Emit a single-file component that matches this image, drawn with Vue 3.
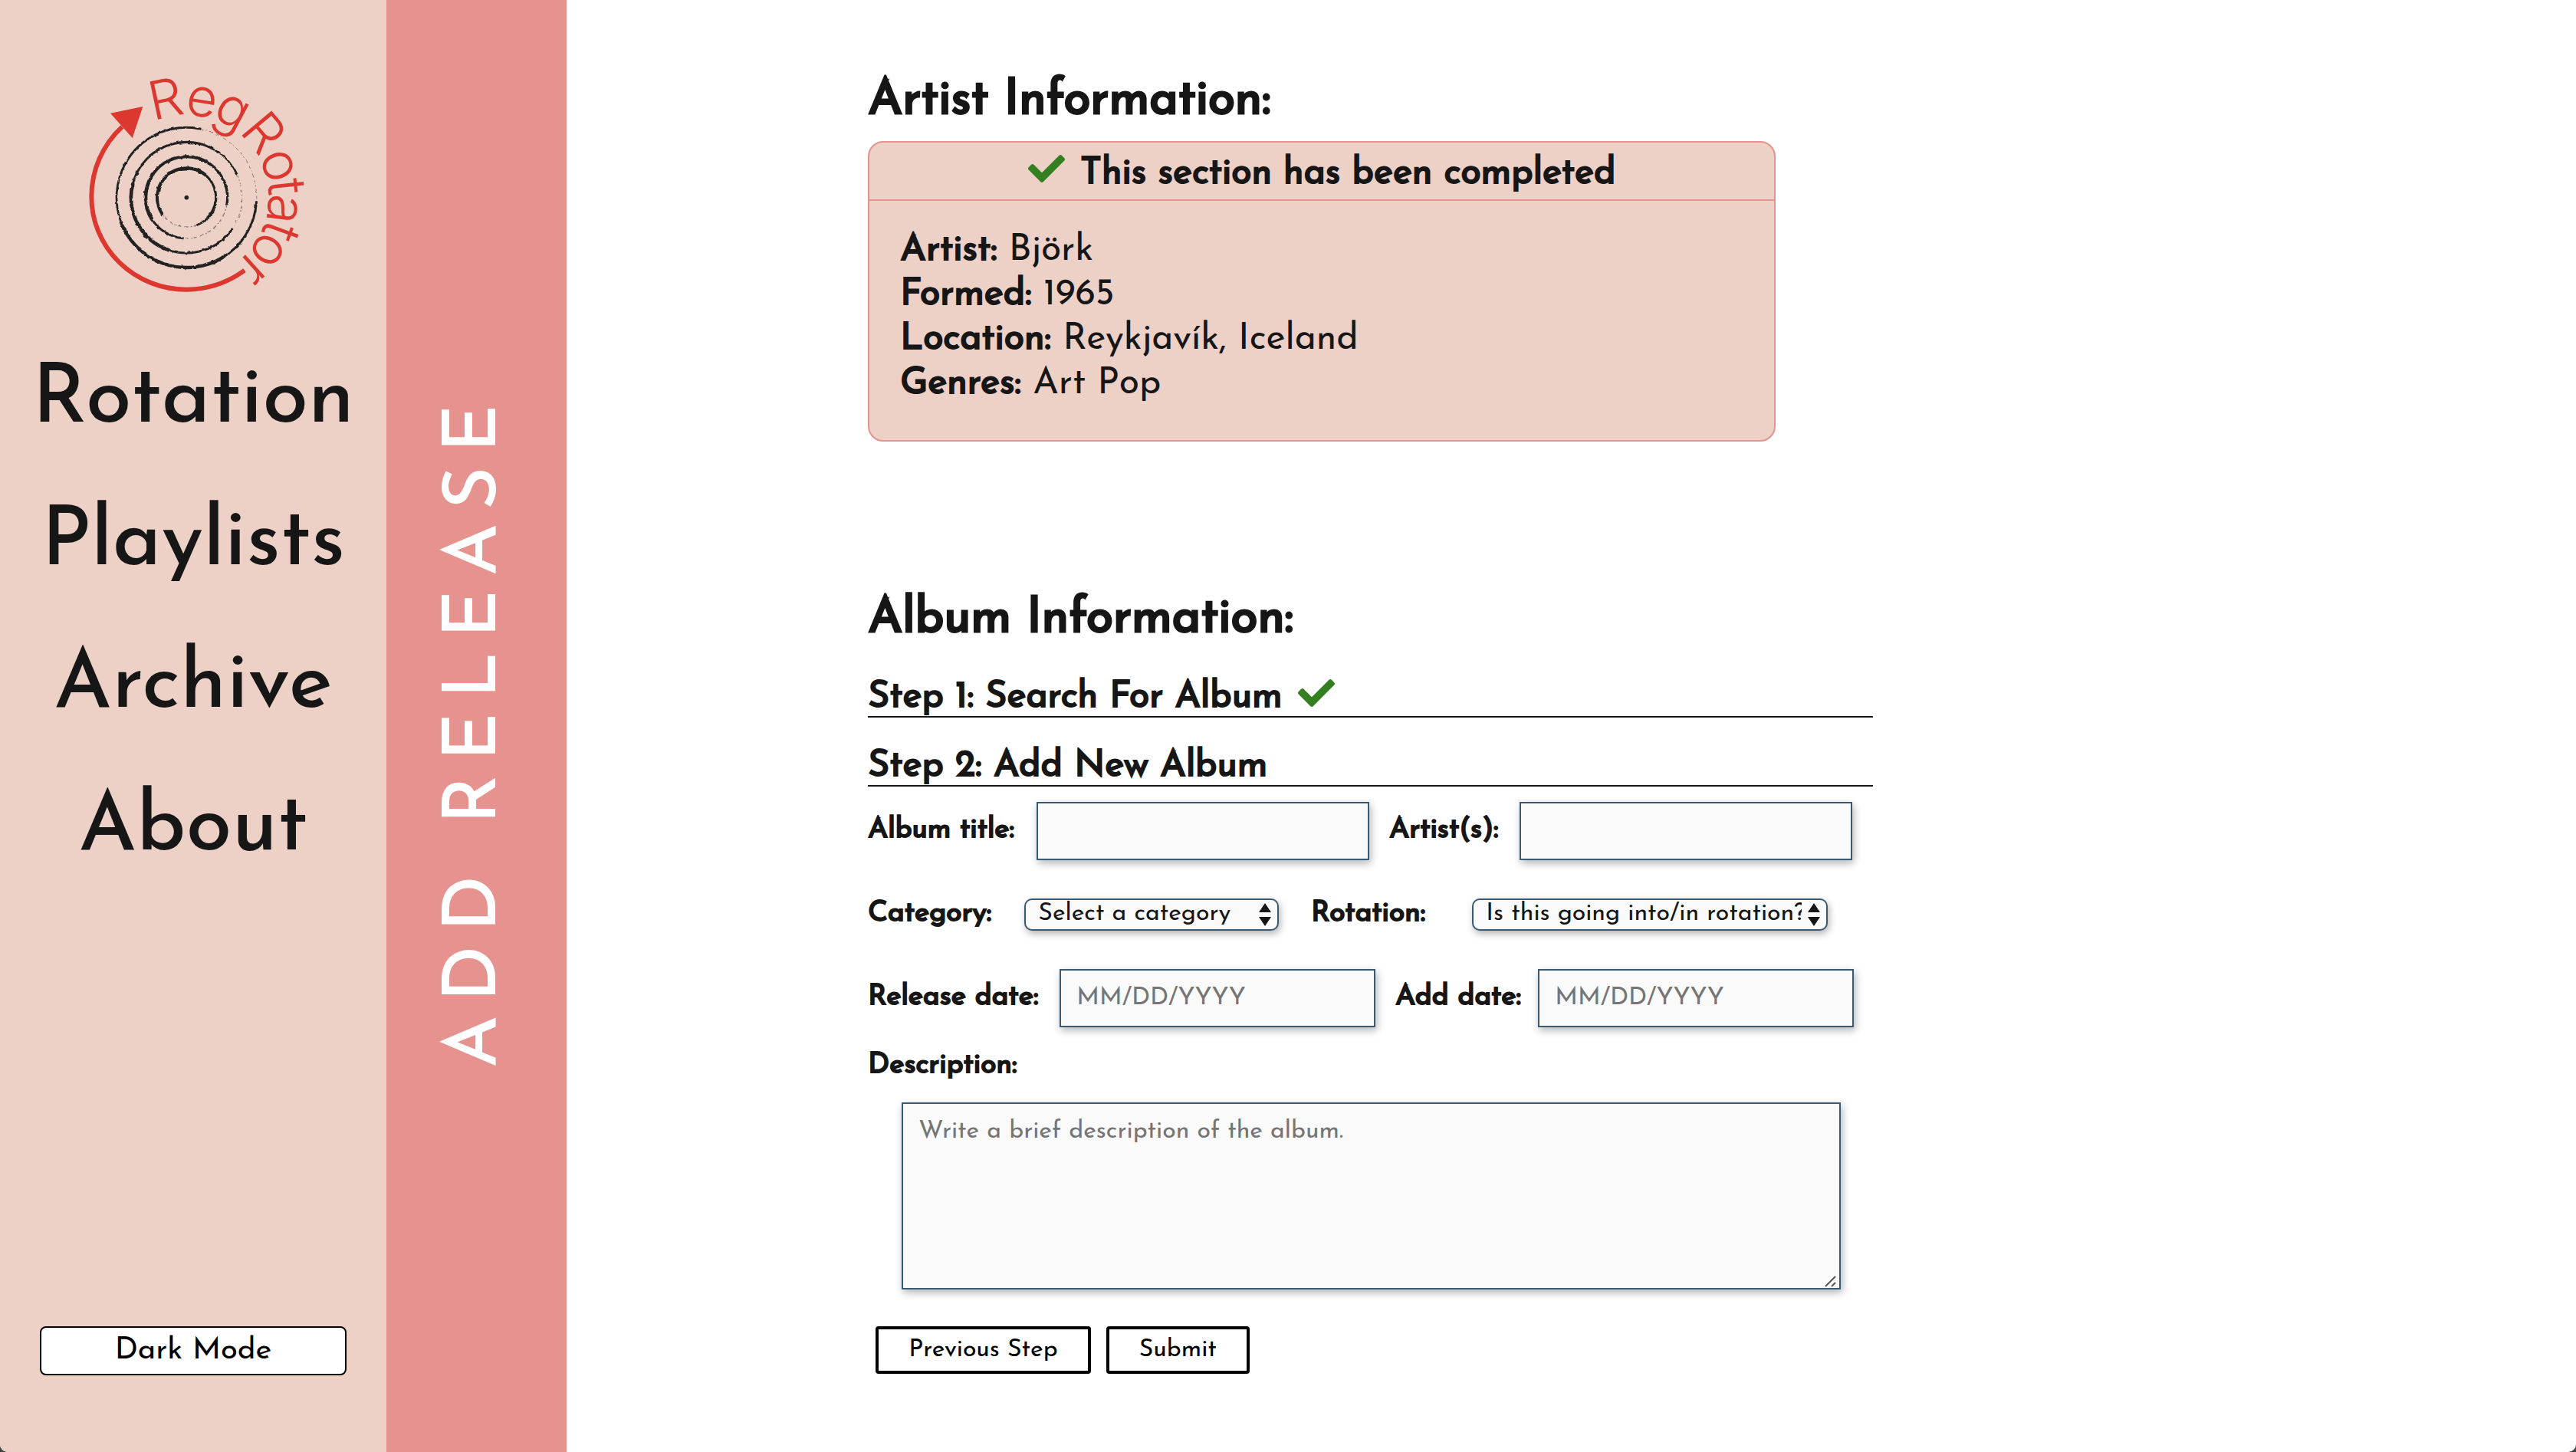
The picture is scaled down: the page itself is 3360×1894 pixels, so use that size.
<script setup>
import { ref } from 'vue'

const links = ['Rotation', 'Playlists', 'Archive', 'About']

const artist = [
  { label: 'Artist:', value: 'Björk' },
  { label: 'Formed:', value: '1965' },
  { label: 'Location:', value: 'Reykjavík, Iceland' },
  { label: 'Genres:', value: 'Art Pop' },
]

const title = ref('')
const artists = ref('')
const category = ref('')
const rotation = ref('')
const releaseDate = ref('')
const addDate = ref('')
const description = ref('')

// Logo lettering: each glyph with its bearing in degrees around the record
const glyphs = [
  ['R', -12], ['e', 9], ['g', 28], ['R', 50], ['o', 71],
  ['t', 84], ['a', 97], ['t', 110], ['o', 123], ['r', 138],
]

// Record grooves: radius, start bearing, end bearing, stroke width, worn or not
const grooves = [
  [274, 93, 150, 9], [274, 148, 250, 13], [274, 248, 300, 8], [274, 298, 372, 9], [274, 12, 93, 3, true],
  [217, 124, 200, 9], [217, 198, 285, 14], [217, 283, 345, 9], [217, 343, 390, 10], [217, 30, 66, 6], [217, 66, 124, 3, true],
  [160, 184, 240, 9], [160, 238, 300, 14], [160, 298, 390, 12], [160, 30, 100, 10], [160, 100, 182, 4, true],
  [115, 234, 290, 12], [115, 288, 400, 13], [115, 38, 100, 9], [115, 98, 135, 12], [115, 135, 160, 8], [115, 160, 232, 4, true],
]

function arc(r, from, to) {
  const point = (deg) => {
    const a = (deg * Math.PI) / 180
    return `${(460 + r * Math.sin(a)).toFixed(1)} ${(533 - r * Math.cos(a)).toFixed(1)}`
  }
  return `M${point(from)}A${r} ${r} 0 0 1 ${point(to)}`
}

const check =
  'M173.898 439.404l-166.4-166.4c-9.997-9.997-9.997-26.206 0-36.204l36.203-36.204c9.997-9.998 26.207-9.998 36.204 0L192 312.69 432.095 72.596c9.997-9.997 26.207-9.997 36.204 0l36.203 36.204c9.997 9.997 9.997 26.206 0 36.204l-294.4 294.401c-9.998 9.997-26.207 9.997-36.204-.001z'
</script>

<template>
  <div class="page">
    <header class="sidebar">
      <svg class="logo" viewBox="-24 0 1020 960" role="img" aria-label="RegRotator">
        <defs>
          <filter id="rough" x="-5%" y="-5%" width="110%" height="110%">
            <feTurbulence type="fractalNoise" baseFrequency="0.06" numOctaves="3" seed="4" />
            <feDisplacementMap in="SourceGraphic" scale="9" xChannelSelector="R" yChannelSelector="G" />
          </filter>
        </defs>
        <g filter="url(#rough)" fill="none" stroke="#212322">
          <path
            v-for="(g, i) in grooves"
            :key="i"
            :d="arc(g[0], g[1], g[2])"
            :stroke-width="g[3]"
            :stroke-dasharray="g[4] ? '12 7 5 9 16 12' : null"
            :opacity="g[4] ? 0.5 : 1"
          />
          <circle cx="460" cy="533" r="8" fill="#212322" />
        </g>
        <path
          d="M208 256A372 372 0 0 0 88 530A370 363 0 0 0 458 893A390 390 0 0 0 687 818"
          fill="none"
          stroke="#dc3830"
          stroke-width="18"
        />
        <path d="M162 203L289 177L248 300Z" fill="#dc3830" />
        <g class="lettering" fill="#dc3830">
          <text
            v-for="(g, i) in glyphs"
            :key="i"
            x="460"
            y="211"
            :transform="`rotate(${g[1]} 460 532)`"
          >{{ g[0] }}</text>
        </g>
      </svg>
      <nav class="nav">
        <a v-for="link in links" :key="link" href="#">{{ link }}</a>
      </nav>
      <button class="mode" type="button">Dark Mode</button>
    </header>

    <div class="banner"><h1>ADD RELEASE</h1></div>

    <main class="main">
      <h2>Artist Information:</h2>
      <section class="card">
        <h3 class="card-head">
          <svg class="check" viewBox="0 65 512 382" aria-hidden="true"><path :d="check" /></svg>
          <span>This section has been completed</span>
        </h3>
        <div class="card-body">
          <p v-for="row in artist" :key="row.label"><b>{{ row.label }}</b> {{ row.value }}</p>
        </div>
      </section>

      <h2 class="album">Album Information:</h2>
      <h3 class="step">
        Step 1: Search For Album
        <svg class="check" viewBox="0 65 512 382" aria-hidden="true"><path :d="check" /></svg>
      </h3>
      <h3 class="step">Step 2: Add New Album</h3>

      <form @submit.prevent>
        <div class="row names">
          <label for="title">Album title:</label>
          <input id="title" v-model="title" type="text" />
          <label for="artists">Artist(s):</label>
          <input id="artists" v-model="artists" type="text" />
        </div>
        <div class="row choices">
          <label for="category">Category:</label>
          <div class="select">
            <select id="category" v-model="category">
              <option value="">Select a category</option>
            </select>
            <svg viewBox="0 0 16 30" aria-hidden="true"><path d="M0 12L8 0L16 12ZM0 18H16L8 30Z" /></svg>
          </div>
          <label for="rotation">Rotation:</label>
          <div class="select">
            <select id="rotation" v-model="rotation">
              <option value="">Is this going into/in rotation?</option>
            </select>
            <svg viewBox="0 0 16 30" aria-hidden="true"><path d="M0 12L8 0L16 12ZM0 18H16L8 30Z" /></svg>
          </div>
        </div>
        <div class="row dates">
          <label for="release">Release date:</label>
          <input id="release" v-model="releaseDate" type="text" placeholder="MM/DD/YYYY" />
          <label for="add">Add date:</label>
          <input id="add" v-model="addDate" type="text" placeholder="MM/DD/YYYY" />
        </div>
        <label class="description" for="description">Description:</label>
        <div class="area">
          <textarea id="description" v-model="description" placeholder="Write a brief description of the album."></textarea>
          <svg viewBox="0 0 15 15" aria-hidden="true"><path d="M1 14L14 1M9 14L14 9" /></svg>
        </div>
        <div class="actions">
          <button type="button">Previous Step</button>
          <button type="submit">Submit</button>
        </div>
      </form>
    </main>
  </div>
</template>

<style>
html {
  background: #444;
}
body {
  margin: 0;
}
</style>

<style scoped>
* {
  box-sizing: border-box;
}
.page {
  display: grid;
  grid-template-columns: 15% 7% 1fr;
  min-height: 100vh;
  overflow: hidden;
  border-radius: 0 0 10px 10px;
  background: #fff;
  color: #161616;
  font-family: 'Josefin Sans', Lato, sans-serif;
}
h1,
h2,
h3,
p {
  margin: 0;
}
h2,
h3,
b,
label {
  font-weight: 400;
  -webkit-text-stroke: 2px currentColor;
}
button,
input,
select,
textarea {
  margin: 0;
  font-family: inherit;
}

.sidebar {
  display: flex;
  flex-direction: column;
  align-items: center;
  padding: 80px 52px 100px;
  background: #edd1c7;
}
.logo {
  width: 340px;
  height: 320px;
  flex: none;
}
.lettering {
  font-family: Inter, sans-serif;
  font-size: 208px;
  font-weight: 260;
  text-anchor: middle;
}
.nav {
  display: flex;
  flex-direction: column;
  align-items: center;
  margin-top: 30px;
}
.nav a {
  color: inherit;
  font-size: 108px;
  font-weight: 500;
  line-height: 186px;
  text-decoration: none;
}
.mode {
  width: 100%;
  height: 64px;
  margin-top: auto;
  padding: 0;
  border: 2px solid #000;
  border-radius: 8px;
  background: #fff;
  color: #000;
  font-size: 40px;
  line-height: 48px;
}

.banner {
  display: flex;
  align-items: center;
  justify-content: center;
  padding-top: 8px;
  background: #e6928f;
  color: #fff;
}
.banner h1 {
  font-size: 97px;
  font-weight: 500;
  letter-spacing: 18px;
  line-height: 120px;
  white-space: nowrap;
  writing-mode: vertical-rl;
  transform: rotate(180deg);
}

.main {
  padding: 96px 35% 100px 15%;
}
h2 {
  font-size: 64px;
  line-height: 72px;
  -webkit-text-stroke-width: 3px;
}
.card {
  width: 1184px;
  max-width: 100%;
  margin-top: 16px;
  border: 2px solid #e6928f;
  border-radius: 20px;
  background: #edd1c7;
  font-size: 48px;
}
.card-head {
  display: flex;
  align-items: flex-start;
  justify-content: center;
  gap: 20px;
  height: 76px;
  padding-top: 16px;
  border-bottom: 2px solid #e6928f;
  font-size: 48px;
  line-height: 50px;
}
.check {
  width: 48px;
  height: 36px;
  fill: #347f20;
}
.card-body {
  padding: 36px 40px 44px;
  line-height: 58px;
}
.album {
  margin-top: 196px;
  margin-bottom: 2px;
}
.step {
  display: flex;
  align-items: flex-start;
  gap: 20px;
  padding-top: 40px;
  border-bottom: 2px solid #161616;
  font-size: 48px;
  line-height: 48px;
}

.row {
  display: grid;
  align-items: center;
  margin-top: 50px;
}
.names {
  grid-template-columns: 220px 434px 196px 434px;
  margin-top: 20px;
}
.choices {
  grid-template-columns: 204px 332px 252px 464px;
}
.dates {
  grid-template-columns: 250px 412px 212px 412px;
}
label {
  padding-bottom: 2px;
  font-size: 37px;
  line-height: 40px;
  white-space: nowrap;
}
.row label:nth-of-type(2) {
  padding-left: 26px;
}
.choices label:nth-of-type(2) {
  padding-left: 42px;
}
input,
select,
textarea {
  width: 100%;
  border: 2px solid #3a5a74;
  border-radius: 0;
  background: #fafafa;
  color: #161616;
  font-size: 32px;
  box-shadow: 2px 4px 10px rgba(0, 0, 0, 0.3);
}
input {
  height: 76px;
  padding: 0 20px;
}
input::placeholder,
textarea::placeholder {
  color: #757575;
}
.select {
  position: relative;
}
select {
  display: block;
  height: 42px;
  padding: 0 32px 2px 16px;
  border-radius: 10px;
  line-height: 36px;
  appearance: none;
}
.select svg {
  position: absolute;
  top: 6px;
  right: 10px;
  width: 16px;
  height: 30px;
  fill: #161616;
  pointer-events: none;
}
.description {
  display: block;
  margin-top: 30px;
  padding: 0;
}
.area {
  position: relative;
  height: 244px;
  margin: 28px 42px 0 44px;
}
textarea {
  display: block;
  height: 100%;
  padding: 16px 20px;
  line-height: 40px;
  resize: none;
}
.area svg {
  position: absolute;
  right: 6px;
  bottom: 3px;
  width: 15px;
  height: 15px;
  fill: none;
  stroke: #555;
  stroke-width: 2;
}
.actions {
  display: flex;
  gap: 20px;
  margin: 48px 0 0 10px;
}
.actions button {
  height: 62px;
  padding: 0 39px;
  border: 4px solid #000;
  border-radius: 4px;
  background: #fff;
  color: #000;
  font-size: 32px;
}
</style>
